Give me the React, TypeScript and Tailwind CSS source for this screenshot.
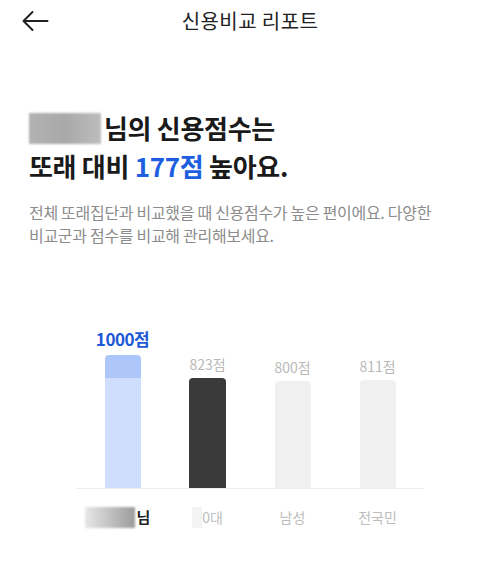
const FONT = { fontFamily: '"Noto Sans CJK KR", "Noto Sans", sans-serif' };

const bars = [
  { label: '1000점', height: 133, kind: 'me' },
  { label: '823점', height: 110, kind: 'peer' },
  { label: '800점', height: 107, kind: 'other' },
  { label: '811점', height: 108, kind: 'other' },
];

function BackArrow() {
  return (
    <svg className="absolute left-[21px] top-[10px]" width="28" height="22" viewBox="0 0 28 22" fill="none">
      <path d="M2.5 11H26.5M11.5 2L2.5 11L11.5 20" stroke="#222" strokeWidth="2" strokeLinecap="round" strokeLinejoin="round" />
    </svg>
  );
}

function Bar({ label, height, kind }: { label: string; height: number; kind: string }) {
  return (
    <div className="flex flex-col items-center justify-end w-[85px]">
      <span
        className={
          kind === 'me'
            ? 'text-[17px] font-bold text-[#1d58d8] leading-[20px] tracking-[-0.5px] mb-[6px]'
            : 'text-[14px] text-[#b9b9b9] leading-[20px] mb-[4px]'
        }
      >
        {label}
      </span>
      {kind === 'me' ? (
        <div className="w-[36px] rounded-t-[4px] overflow-hidden flex flex-col" style={{ height }}>
          <div className="h-[23px] bg-[#adc7fb]" />
          <div className="flex-1 bg-[#cfdefd]" />
        </div>
      ) : (
        <div
          className={kind === 'peer' ? 'w-[37px] rounded-t-[4px] bg-[#3a3a3a]' : 'w-[36px] rounded-t-[4px] bg-[#f0f0f0]'}
          style={{ height }}
        />
      )}
    </div>
  );
}

export default function App() {
  return (
    <div className="w-[500px] h-[587px] bg-white text-[#222]" style={FONT}>
      <header className="relative h-[42px] flex items-center justify-center">
        <BackArrow />
        <h1 className="text-[20px] text-[#222] tracking-[0.4px]">신용비교 리포트</h1>
      </header>

      <section className="px-[29px] mt-[67px]">
        <h2 className="text-[26px] font-bold leading-[38px] tracking-[-0.3px] text-[#1a1a1a]">
          <div className="flex items-center h-[38px]">
            <span className="w-[72px] h-[31px] mr-[3px] bg-gradient-to-r from-[#b2b2b2] via-[#a9a9a9] to-[#bdbdbd] blur-[1px]" />
            <span>님의 신용점수는</span>
          </div>
          <div className="h-[38px]">
            또래 대비 <span className="text-[#1d5fe0]">177점</span> 높아요.
          </div>
        </h2>
        <p className="mt-[16px] text-[16px] leading-[23px] text-[#8c8c8c] tracking-[-0.3px]">
          전체 또래집단과 비교했을 때 신용점수가 높은 편이에요. 다양한
          <br />
          비교군과 점수를 비교해 관리해보세요.
        </p>
      </section>

      <section className="mt-[84px] px-[76px]">
        <div className="flex justify-start px-[4px] h-[158px] items-end border-b border-[#ececec]">
          {bars.map((b) => (
            <Bar key={b.label} {...b} />
          ))}
        </div>
        <div className="flex px-[4px] mt-[17px] h-[22px] text-[14px] text-[#bdbdbd]">
          <div className="w-[85px] flex items-center justify-center pr-[10px]">
            <span className="inline-block w-[50px] h-[21px] bg-gradient-to-r from-[#e8e8e8] to-[#9c9c9c] blur-[1px] mr-[2px]" />
            <span className="text-[15px] font-bold text-[#222]">님</span>
          </div>
          <div className="w-[85px] flex items-center justify-center">
            <span className="inline-block w-[10px] h-[21px] bg-[#f3f3f3]" />
            <span>0대</span>
          </div>
          <div className="w-[85px] flex items-center justify-center">남성</div>
          <div className="w-[85px] flex items-center justify-center">전국민</div>
        </div>
      </section>
    </div>
  );
}
